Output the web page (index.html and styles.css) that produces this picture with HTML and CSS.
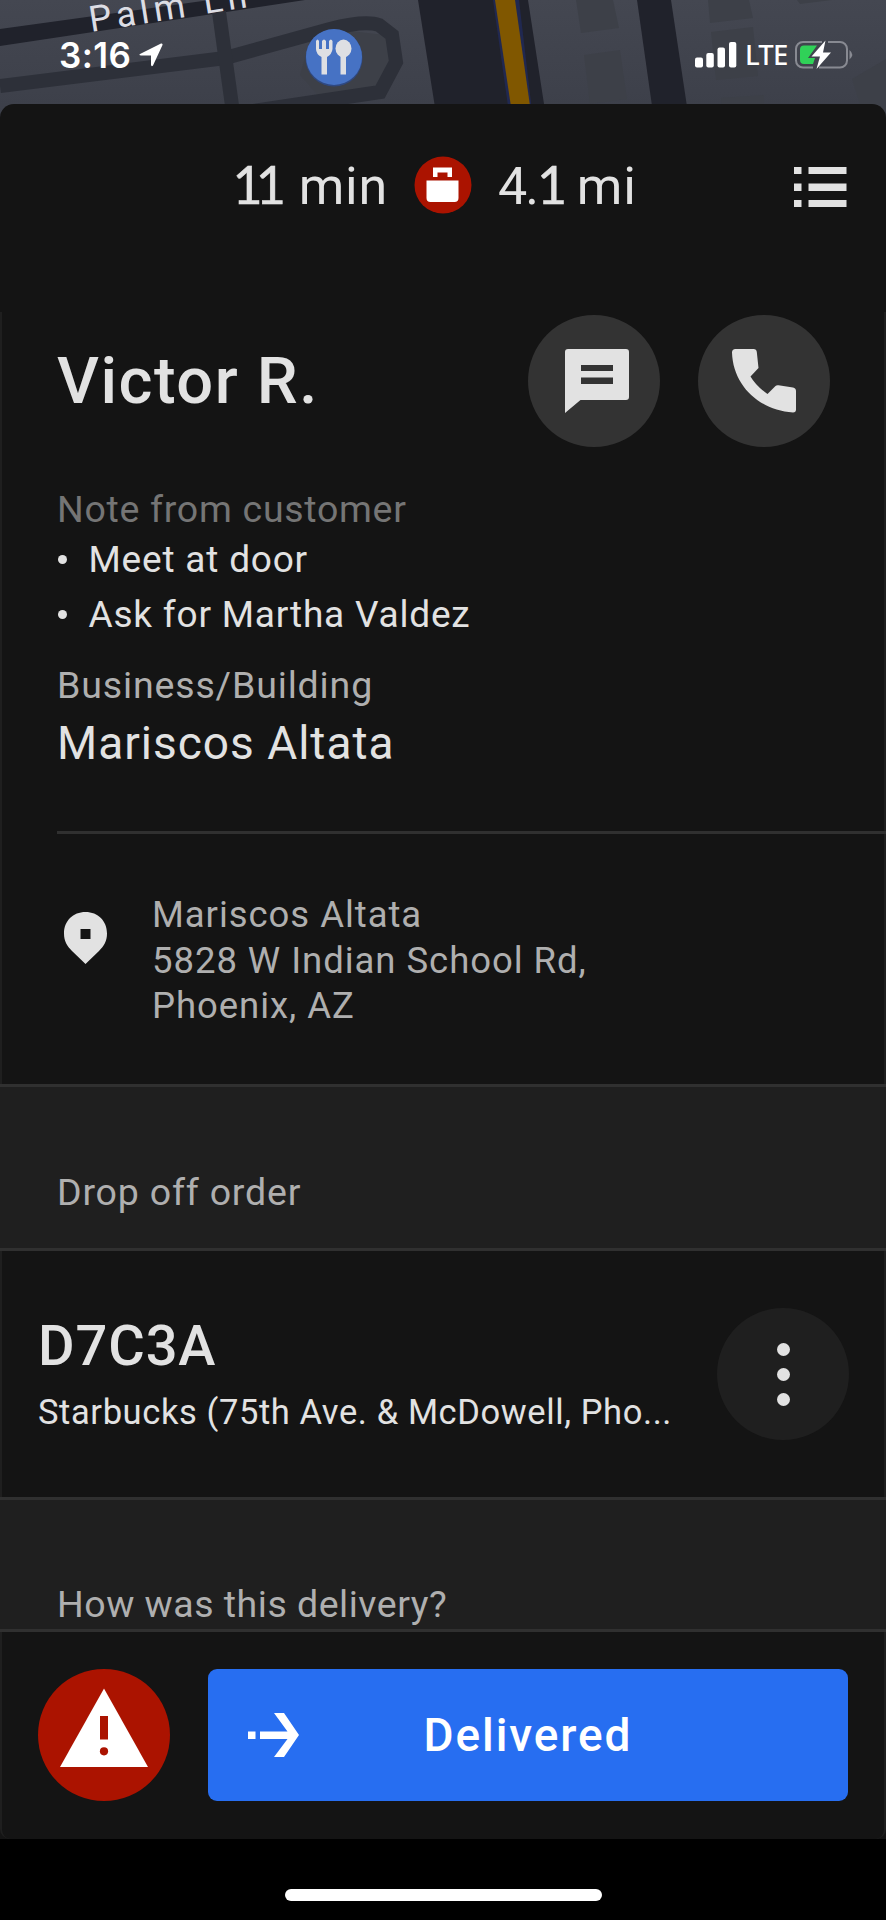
FILE: index.html
```html
<!DOCTYPE html>
<html lang="en">
<head>
<meta charset="utf-8">
<title>Delivery</title>
<link rel="stylesheet" href="styles.css">
</head>
<body>
<div class="screen">
  <header class="map">
    <svg class="map-art" width="886" height="120" viewBox="0 0 886 120">
      <defs>
        <linearGradient id="ground" x1="0" y1="0" x2="0" y2="1"><stop offset="0" stop-color="#444751"/><stop offset="1" stop-color="#3c3f49"/></linearGradient>
      </defs>
      <rect width="886" height="120" fill="url(#ground)"/>
      <path d="M0 29L210 0H305L0 46Z" fill="#20222b"/>
      <path d="M310 40L350 31L385 35L391 62L375 88L318 95L300 75Z" fill="#3d4048"/>
      <path d="M0 86L225 58L330 29Q365 20 379 25L392 35L396 62L380 92L240 113" fill="none" stroke="#2d3039" stroke-width="14"/>
      <path d="M219 12L234 120" stroke="#2d3039" stroke-width="14"/>
      <path d="M418 0H528L544 104V120H437Z" fill="#20222b"/>
      <path d="M493 0H519L533 120H510Z" fill="#202850"/>
      <path d="M495 0H515L532 120H513Z" fill="#805700"/>
      <path d="M637 0H671L689 120H654Z" fill="#20222b"/>
      <g fill="#3d4048">
        <path d="M576 0H613L619 28L581 33Z"/><path d="M584 55L620 50L627 99L590 104Z"/>
        <path d="M708 0H749L753 18L710 23Z"/><path d="M711 32L753 27L758 76L716 80Z"/>
        <path d="M721 98L764 95V120H722Z"/><path d="M852 79L886 59V120H865Z"/>
        <path d="M797 0H832L800 4Z"/>
      </g>
      <text class="street" transform="translate(91 32) rotate(-9)">Palm Ln</text>
      <circle cx="334" cy="58" r="28.5" fill="#2f4880"/>
      <circle cx="334" cy="57" r="28" fill="#4672c4"/>
      <g fill="#dedfe3">
        <path d="M316 41Q317.500 38 319 41V49H322V41Q324 38 326 41V49H329V41Q331 38 332.500 41V49Q332 54 327 57V74.500H321.500V57Q316 54 316 49Z"/>
        <ellipse cx="343.500" cy="48.500" rx="8" ry="9"/><rect x="340.500" y="54" width="5.500" height="20.500"/>
      </g>
    </svg>
    <div class="status">
      <span class="time">3:16</span>
      <svg class="locate" width="24" height="24" viewBox="0 0 24 24"><path d="M1 11L22 .5Q24 0 23.500 2L14 22.500Q12.500 24 12 22V12.500H2Q-.5 12 1 11Z" fill="#fff"/></svg>
      <svg class="signal" width="42" height="26" viewBox="0 0 42 26" fill="#fff"><rect x="0" y="15.500" width="8" height="10" rx="2"/><rect x="11.300" y="11" width="7.500" height="14.500" rx="2"/><rect x="22.500" y="5.500" width="7.500" height="20" rx="2"/><rect x="34" y="0" width="7.300" height="25.500" rx="2"/></svg>
      <span class="net">LTE</span>
      <svg class="battery" width="58" height="28" viewBox="0 0 58 28">
        <rect x="1" y="1" width="51" height="25.500" rx="7" fill="none" stroke="#888a92" stroke-width="2"/>
        <path d="M54.500 9Q60 13.700 54.500 18.500Z" fill="#888a92"/>
        <path d="M9 4.500H22L13 17H20L18 23H9Q5 23 5 19V8.500Q5 4.500 9 4.500Z" fill="#30d158"/>
        <path d="M27 -1H33V3H27ZM18 24H24V28H18Z" fill="#40434c"/>
        <path d="M30.500 -.5L16.500 15.500H25L21.500 28L36 11.500H28Z" fill="#fff"/>
      </svg>
    </div>
  </header>

  <main class="sheet">
    <div class="trip">
      <span class="eta"><span class="slab eleven">11</span> min</span>
      <svg class="bag" width="58" height="58" viewBox="0 0 58 58"><circle cx="29" cy="29" r="28.500" fill="#ab1300"/><path d="M12.500 24.500H44.500V42Q44.500 46 40.500 46H16.500Q12.500 46 12.500 42ZM19 21V11.500H38V21H33.500V16.500H23.500V21Z" fill="#fff"/></svg>
      <span class="miles"><span class="whole">4.</span><span class="slab one">1</span> mi</span>
      <svg class="list" width="53" height="41" viewBox="0 0 53 41" fill="#e2e2e2"><path d="M0 0H7.500V7H0ZM14.500 0H52.500V7H14.500ZM0 16.500H7.500V24H0ZM14.500 16.500H52.500V24H14.500ZM0 33H7.500V40H0ZM14.500 33H52.500V40H14.500Z"/></svg>
    </div>

    <div class="body">
      <section class="customer">
        <div class="person">
          <h1 class="name">Victor R.</h1>
          <span class="round chat">
            <svg width="64" height="64" viewBox="0 0 64 64"><path fill-rule="evenodd" d="M3 0H61Q64 0 64 3V48Q64 51 61 51H15.500L0 64V3Q0 0 3 0ZM16 16V22H48V16ZM16 28.500V35H48V28.500Z" fill="#e2e2e2"/></svg>
          </span>
          <span class="round">
            <svg width="64" height="64" viewBox="0 0 64 64"><path d="M3.500 0H21.500Q24.500 0 24.800 3L26.500 19L18.500 27.500Q24 37 35.500 45L43.500 37Q44.500 36 46.500 36.300L61 38.500Q64 39 64 42V60.500Q64 63.500 61 63.500C28 61.500 1 37 0 3.500Q0 0 3.500 0Z" fill="#e2e2e2"/></svg>
          </span>
        </div>
        <p class="label note">Note from customer</p>
        <ul class="notes">
          <li class="door">Meet at door</li>
          <li class="ask">Ask for Martha Valdez</li>
        </ul>
        <p class="label business">Business/Building</p>
        <p class="building">Mariscos Altata</p>
      </section>

      <section class="address">
        <svg class="pin" width="43" height="52" viewBox="0 0 43 52"><path fill-rule="evenodd" d="M21.500 0C34 0 43 9 43 21.500C43 29 40 34 35 39L21.500 52L8 39C3 34 0 29 0 21.500C0 9 9 0 21.500 0ZM16.500 17V27H26.500V17Z" fill="#e2e2e2"/></svg>
        <div class="lines">Mariscos Altata<br>5828 W Indian School Rd,<br>Phoenix, AZ</div>
      </section>

      <h2 class="band drop"><span>Drop off order</span></h2>

      <section class="order">
        <div class="order-text">
          <p class="code">D7C3A</p>
          <p class="store">Starbucks (75th Ave. &amp; McDowell, Pho...</p>
        </div>
        <span class="more"><i class="dot"></i><i class="dot"></i><i class="dot"></i></span>
      </section>

      <h2 class="band rating"><span>How was this delivery?</span></h2>

      <footer class="actions">
        <svg class="alert" width="132" height="132" viewBox="0 0 132 132"><circle cx="66" cy="66" r="66" fill="#ab1300"/><path d="M66 19.500L110 98H22Z" fill="#fff"/><path d="M62 47H70V70.500H62Z" fill="#ab1300"/><circle cx="66" cy="82.300" r="4.100" fill="#ab1300"/></svg>
        <div class="deliver">
          <svg class="arrow" width="51" height="44" viewBox="0 0 51 44" fill="#fff"><path d="M0 18.500H7.500V26H0ZM12 18.500H39.500L26 0H36L51 22L36 44H26L39.500 26H12Z"/></svg>
          <span class="deliver-text">Delivered</span>
        </div>
      </footer>
    </div>
  </main>
  <div class="home"><div class="home-bar"></div></div>
</div>
</body>
</html>
```
FILE: styles.css
```css
* { box-sizing: border-box; margin: 0; padding: 0; }
body { background: #000; width: 886px; height: 1920px; overflow: hidden; font-family: Roboto, "Liberation Sans", sans-serif; color: #e2e2e2; }
h1, h2, p { font-weight: 400; white-space: nowrap; }
svg { display: block; flex: none; overflow: visible; }
.screen { display: flex; flex-direction: column; height: 1920px; }

.map { height: 104px; position: relative; }
.map-art { position: absolute; left: 0; top: 0; }
.street { font: 400 36px Roboto, sans-serif; letter-spacing: 4.8px; fill: #dcdde4; }
.status { position: relative; display: flex; align-items: center; height: 109px; padding: 0 33px 0 59px; color: #fff; }
.time { font: 600 35px/40px Inter, sans-serif; width: 80px; letter-spacing: 0.4px; }
.signal { margin-left: auto; }
.net { font: 500 27.5px/40px "Noto Sans", sans-serif; width: 41px; margin: 0 9px 0 8px; letter-spacing: -0.8px; }

.sheet { position: relative; height: 1735px; background: #141414; border-radius: 14px 14px 0 0; }
.trip { display: grid; grid-template-columns: 388px 110px 296px 1fr; align-items: center; height: 208px; padding-bottom: 46px; font-size: 52px; font-weight: 400; line-height: 60px; white-space: nowrap; }
.eta { text-align: right; letter-spacing: 0.8px; }
.miles { letter-spacing: 0.8px; }
.bag { justify-self: center; }
.slab { font-family: Lato, sans-serif; letter-spacing: -7px; -webkit-text-stroke: 0.5px #e2e2e2; }
.eleven { margin-right: 6px; }
.whole { letter-spacing: -2px; }
.one { letter-spacing: -4px; }
.list { margin-top: 5px; }

.body { height: 1527px; border: solid #1f1f1f; border-width: 0 2px; border-radius: 0 0 10px 10px; }
.customer { height: 522px; margin-left: 55px; padding-top: 2px; border-bottom: 3px solid #303030; margin-right: -2px; }
.person { display: flex; align-items: center; height: 133px; gap: 38px; padding-right: 56px; }
.name { font-size: 65px; font-weight: 500; line-height: 76px; margin-right: auto; letter-spacing: 1.5px; }
.round { display: grid; place-items: center; flex: none; width: 132px; height: 132px; border-radius: 50%; background: #333; }
.chat { padding-left: 6px; }
.label { font-size: 37.5px; line-height: 46px; color: #afafaf; letter-spacing: 0.85px; }
.note { margin-top: 39px; color: #757575; letter-spacing: 0.7px; }
.notes { list-style: none; font-size: 37px; line-height: 55px; letter-spacing: 0.8px; }
.notes li { display: flex; align-items: center; gap: 21.5px; white-space: nowrap; }
.notes li::before { content: ""; width: 9px; height: 9px; border-radius: 50%; background: #e2e2e2; margin-left: 1px; }
.business { margin-top: 20px; }
.building { font-size: 46px; line-height: 60px; margin-top: 5px; letter-spacing: 1px; }

.address { display: flex; height: 250px; padding: 58px 0 0 62px; gap: 45px; font-size: 36.5px; line-height: 45.5px; color: #afafaf; letter-spacing: 0.95px; }
.pin { margin-top: 20px; }
.lines { white-space: nowrap; }

.band { margin: 0 -2px; background: #1f1f1f; border: solid #303030; border-width: 3px 0; font-size: 37.5px; line-height: 46px; letter-spacing: 0.8px; color: #afafaf; padding-left: 57px; }
.drop { height: 167px; padding-top: 82px; }
.order { display: flex; align-items: center; height: 246px; padding: 0 35px 0 36px; justify-content: space-between; }
.order-text { white-space: nowrap; }
.code { font-size: 56px; font-weight: 500; line-height: 64px; letter-spacing: 0.9px; }
.store { font-size: 34.5px; line-height: 44px; margin-top: 12px; letter-spacing: 0.6px; }
.more { display: flex; flex-direction: column; align-items: center; justify-content: center; gap: 12px; width: 132px; height: 132px; border-radius: 50%; background: #1f1f1f; flex: none; }
.dot { width: 13px; height: 13px; border-radius: 50%; background: #e2e2e2; }
.rating { height: 135px; padding-top: 81px; letter-spacing: 0.5px; }

.actions { display: flex; gap: 38px; padding: 37px 36px 0; }
.deliver { position: relative; flex: 1; display: grid; place-items: center; height: 132px; border-radius: 9px; background: #276ef1; color: #fff; font-size: 46px; font-weight: 500; letter-spacing: 1.9px; }
.arrow { position: absolute; left: 40px; top: 44px; }

.home { flex: 1; display: flex; justify-content: center; padding-top: 50px; }
.home-bar { width: 317px; height: 12px; border-radius: 6px; background: #fff; }
```
